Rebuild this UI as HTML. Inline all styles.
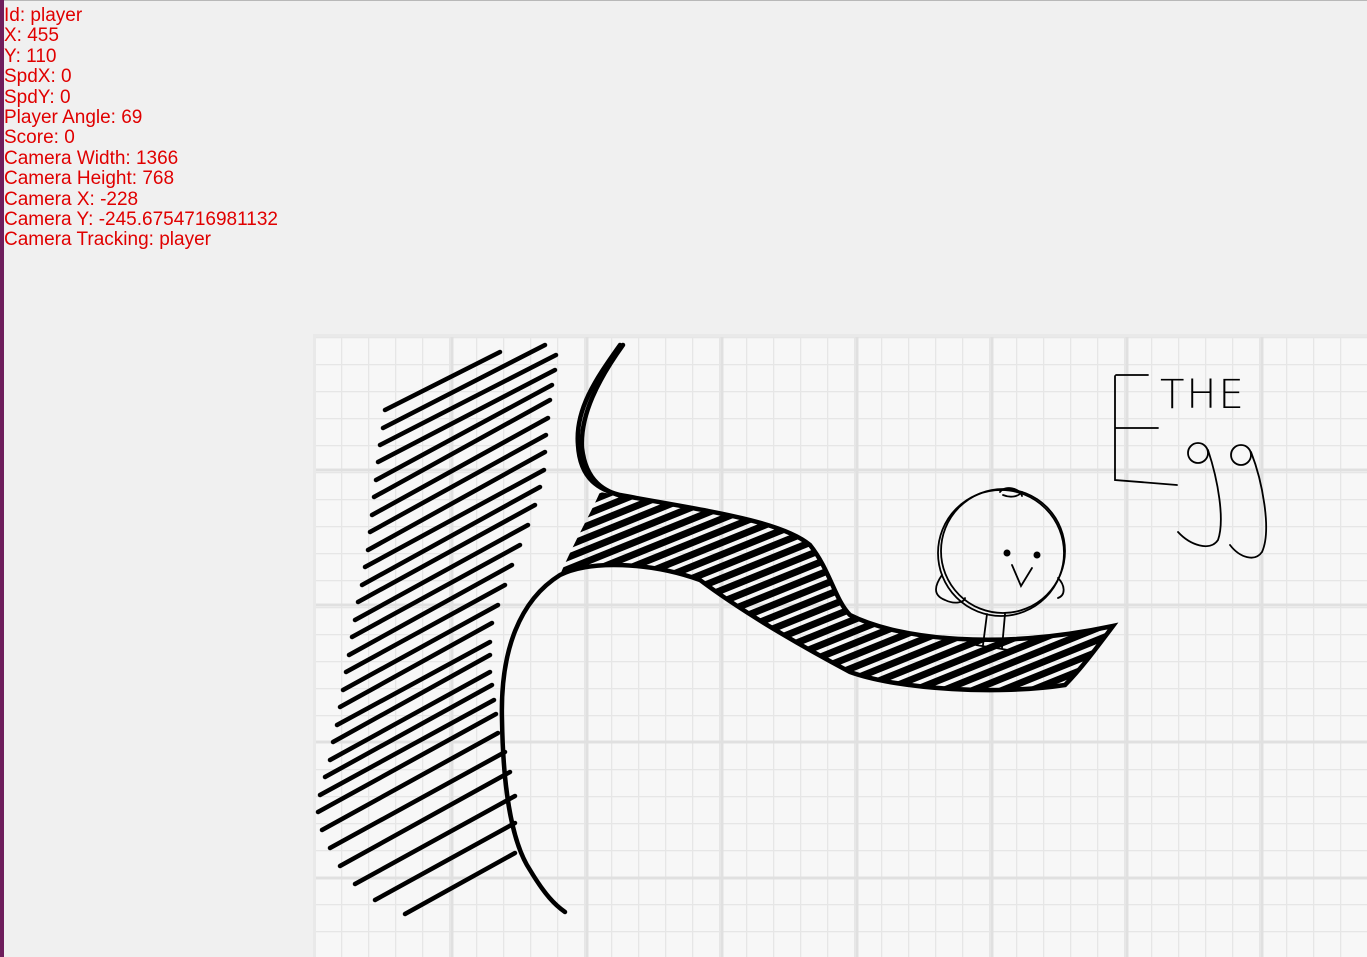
<!DOCTYPE html>
<html><head><meta charset="utf-8"><style>
html,body{margin:0;padding:0;width:1367px;height:957px;overflow:hidden;background:#f0f0f0;font-family:"Liberation Sans",sans-serif}
#bar{position:absolute;left:0;top:0;width:4px;height:957px;background:#6e1d5c}
#top{position:absolute;left:0;top:0;width:1367px;height:1px;background:#b8b8b8}
#info{position:absolute;left:4px;top:6px;color:#e00000;font-size:19px;line-height:20.4px}
svg{position:absolute;left:0;top:0}
</style></head><body>
<div id="top"></div><div id="bar"></div>
<svg width="1367" height="957" viewBox="0 0 1367 957">
<defs>
<pattern id="minor" x="314" y="337" width="27" height="27" patternUnits="userSpaceOnUse">
<path d="M0.5 0V27M0 0.5H27" stroke="#e6e6e6" stroke-width="1.5" fill="none"/></pattern>
<pattern id="hatch" width="11" height="11" patternUnits="userSpaceOnUse" patternTransform="rotate(-22)">
<rect width="11" height="7" fill="#000"/></pattern>
</defs>
<rect x="313" y="334" width="1054" height="623" fill="#e9e9e9"/>
<rect x="316" y="337" width="1051" height="620" fill="#f7f7f7"/>
<rect x="316" y="337" width="1051" height="620" fill="url(#minor)"/>
<g stroke="#e0e0e0" stroke-width="3">
<line x1="452" y1="337" x2="452" y2="957"/><line x1="587" y1="337" x2="587" y2="957"/>
<line x1="722" y1="337" x2="722" y2="957"/><line x1="857" y1="337" x2="857" y2="957"/>
<line x1="992" y1="337" x2="992" y2="957"/><line x1="1127" y1="337" x2="1127" y2="957"/>
<line x1="1262" y1="337" x2="1262" y2="957"/>
<line x1="316" y1="470" x2="1367" y2="470"/><line x1="316" y1="605" x2="1367" y2="605"/>
<line x1="316" y1="742" x2="1367" y2="742"/><line x1="316" y1="878" x2="1367" y2="878"/>
</g>
<g stroke="#000" stroke-width="4.5" stroke-linecap="round" fill="none">
<path d="M385 410L500 352M383 428L545 345M380 445L556 355M378 462L555 370M376 480L552 385M374 497L550 400M372 515L548 418M370 532L546 435M368 550L545 452M365 567L544 470M362 585L540 487M358 602L535 505M355 620L528 525M352 637L520 545M349 655L512 565M346 672L505 585M343 690L498 605M340 707L492 623M337 725L490 642M333 742L490 655M330 760L490 672M325 777L492 685M320 795L494 700M318 812L496 714M322 830L498 733M330 848L505 752M340 866L510 772M355 884L515 796M375 900L515 823M405 914L515 853"/>
<path d="M620 345C595 380 575 410 578 445C580 480 600 490 620 495C700 510 780 520 810 545C830 570 835 600 850 615C900 640 1000 650 1113 626C1095 650 1080 670 1065 685C1000 695 900 690 850 672C790 640 740 610 700 580C650 562 590 560 560 575C520 600 500 650 502 720C503 780 510 840 530 870C545 895 555 905 565 912"/>
<path d="M623 345C598 380 580 415 582 448C586 482 605 492 625 497"/>
</g>
<path d="M600 492C700 510 780 520 810 545C830 570 835 600 850 615C900 640 1000 650 1113 626C1095 650 1080 670 1065 685C1000 695 900 690 850 672C790 640 740 610 700 580C650 562 590 560 560 575C575 540 590 515 600 492Z" fill="url(#hatch)"/>
<g stroke="#000" stroke-width="1.8" fill="none" stroke-linecap="round">
<circle cx="1001" cy="553" r="63"/>
<circle cx="1003" cy="551" r="62"/>
<path d="M1000 492C1005 485 1020 488 1022 496M1003 495C1010 498 1018 497 1022 492"/>
<path d="M942 575C935 585 932 595 945 600C955 605 965 602 965 598M1058 578C1065 585 1066 595 1058 598"/>
<path d="M1012 565L1021 586L1032 568"/>
<path d="M987 614L983 645M976 645L988 647M1005 614L1002 648M996 648L1008 650"/>
<path d="M1116 375H1148M1115 376V480L1177 485M1115 428H1158"/>
<circle cx="1198" cy="453" r="10"/><circle cx="1241" cy="455" r="10"/>
<path d="M1208 450C1218 480 1225 520 1218 540C1210 552 1190 545 1178 532"/>
<path d="M1251 452C1262 480 1272 530 1262 552C1255 562 1240 558 1230 545"/>
</g>
<circle cx="1007" cy="553" r="3.5"/><circle cx="1037" cy="555" r="3.5"/>
<text x="1160" y="408" font-family="DejaVu Sans" font-weight="200" font-size="40" fill="#000" letter-spacing="2">THE</text>
</svg>
<div id="info">Id: player<br>X: 455<br>Y: 110<br>SpdX: 0<br>SpdY: 0<br>Player Angle: 69<br>Score: 0<br>Camera Width: 1366<br>Camera Height: 768<br>Camera X: -228<br>Camera Y: -245.6754716981132<br>Camera Tracking: player</div>
</body></html>
